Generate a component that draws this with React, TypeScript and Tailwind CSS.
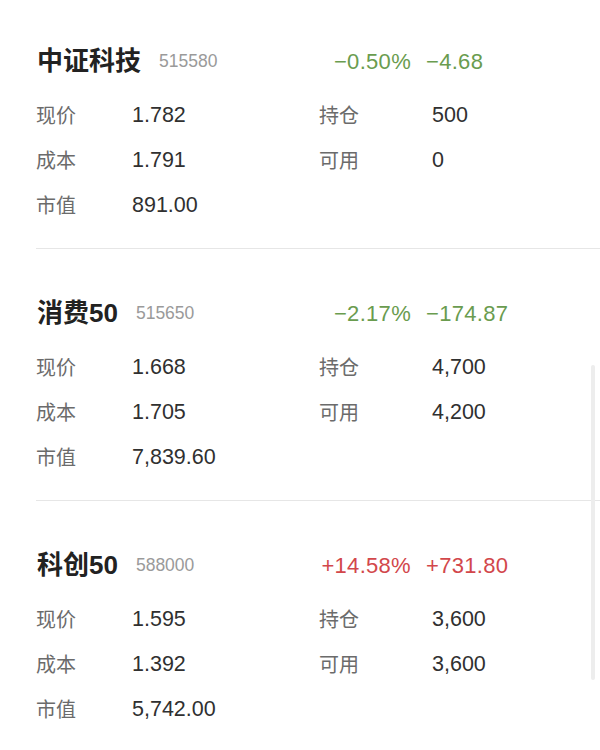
import React from 'react';

type Holding = {
  name: string;
  code: string;
  pct: string;
  amount: string;
  up: boolean;
  price: string;
  cost: string;
  value: string;
  qty: string;
  free: string;
};

const holdings: Holding[] = [
  { name: '中证科技', code: '515580', pct: '−0.50%', amount: '−4.68', up: false, price: '1.782', cost: '1.791', value: '891.00', qty: '500', free: '0' },
  { name: '消费50', code: '515650', pct: '−2.17%', amount: '−174.87', up: false, price: '1.668', cost: '1.705', value: '7,839.60', qty: '4,700', free: '4,200' },
  { name: '科创50', code: '588000', pct: '+14.58%', amount: '+731.80', up: true, price: '1.595', cost: '1.392', value: '5,742.00', qty: '3,600', free: '3,600' },
];

const Row = ({ label, value, label2, value2 }: { label: string; value: string; label2?: string; value2?: string }) => (
  <div className="flex h-[45px] items-center">
    <span className="w-[96px] text-[20px] text-[#6b6b6b]">{label}</span>
    <span className="w-[187px] text-[21.5px] text-[#303030]">{value}</span>
    {label2 && (
      <>
        <span className="w-[113px] text-[20px] text-[#6b6b6b]">{label2}</span>
        <span className="text-[21.5px] text-[#303030]">{value2}</span>
      </>
    )}
  </div>
);

const Card = ({ h, first }: { h: Holding; first: boolean }) => (
  <div className={`${first ? 'pt-[45px]' : 'pt-[48px]'} pb-[20px] border-b border-[#e6e6e6]`}>
    <div className="flex h-[32px] items-center pl-[1px]">
      <span className="text-[26px] font-semibold text-[#222]">{h.name}</span>
      <span className="ml-[18px] text-[17.5px] text-[#9a9a9a]">{h.code}</span>
      <span className={`ml-auto text-[22px] tracking-[0.3px] ${h.up ? 'text-[#d2474b]' : 'text-[#6a9c4f]'}`}>{h.pct}</span>
      <span className={`ml-[15px] w-[174px] text-[22px] tracking-[0.3px] ${h.up ? 'text-[#d2474b]' : 'text-[#6a9c4f]'}`}>{h.amount}</span>
    </div>
    <div className="mt-[16px]">
      <Row label="现价" value={h.price} label2="持仓" value2={h.qty} />
      <Row label="成本" value={h.cost} label2="可用" value2={h.free} />
      <Row label="市值" value={h.value} />
    </div>
  </div>
);

export default function App() {
  return (
    <div
      className="relative h-[750px] w-[600px] overflow-hidden bg-white pl-[36px]"
      style={{ fontFamily: '"Liberation Sans", "Noto Sans CJK SC", sans-serif' }}
    >
      {holdings.map((h, i) => (
        <Card key={h.code} h={h} first={i === 0} />
      ))}
      <div className="absolute left-[591px] top-[365px] h-[315px] w-[4px] rounded-full bg-[#ededed]" />
    </div>
  );
}
